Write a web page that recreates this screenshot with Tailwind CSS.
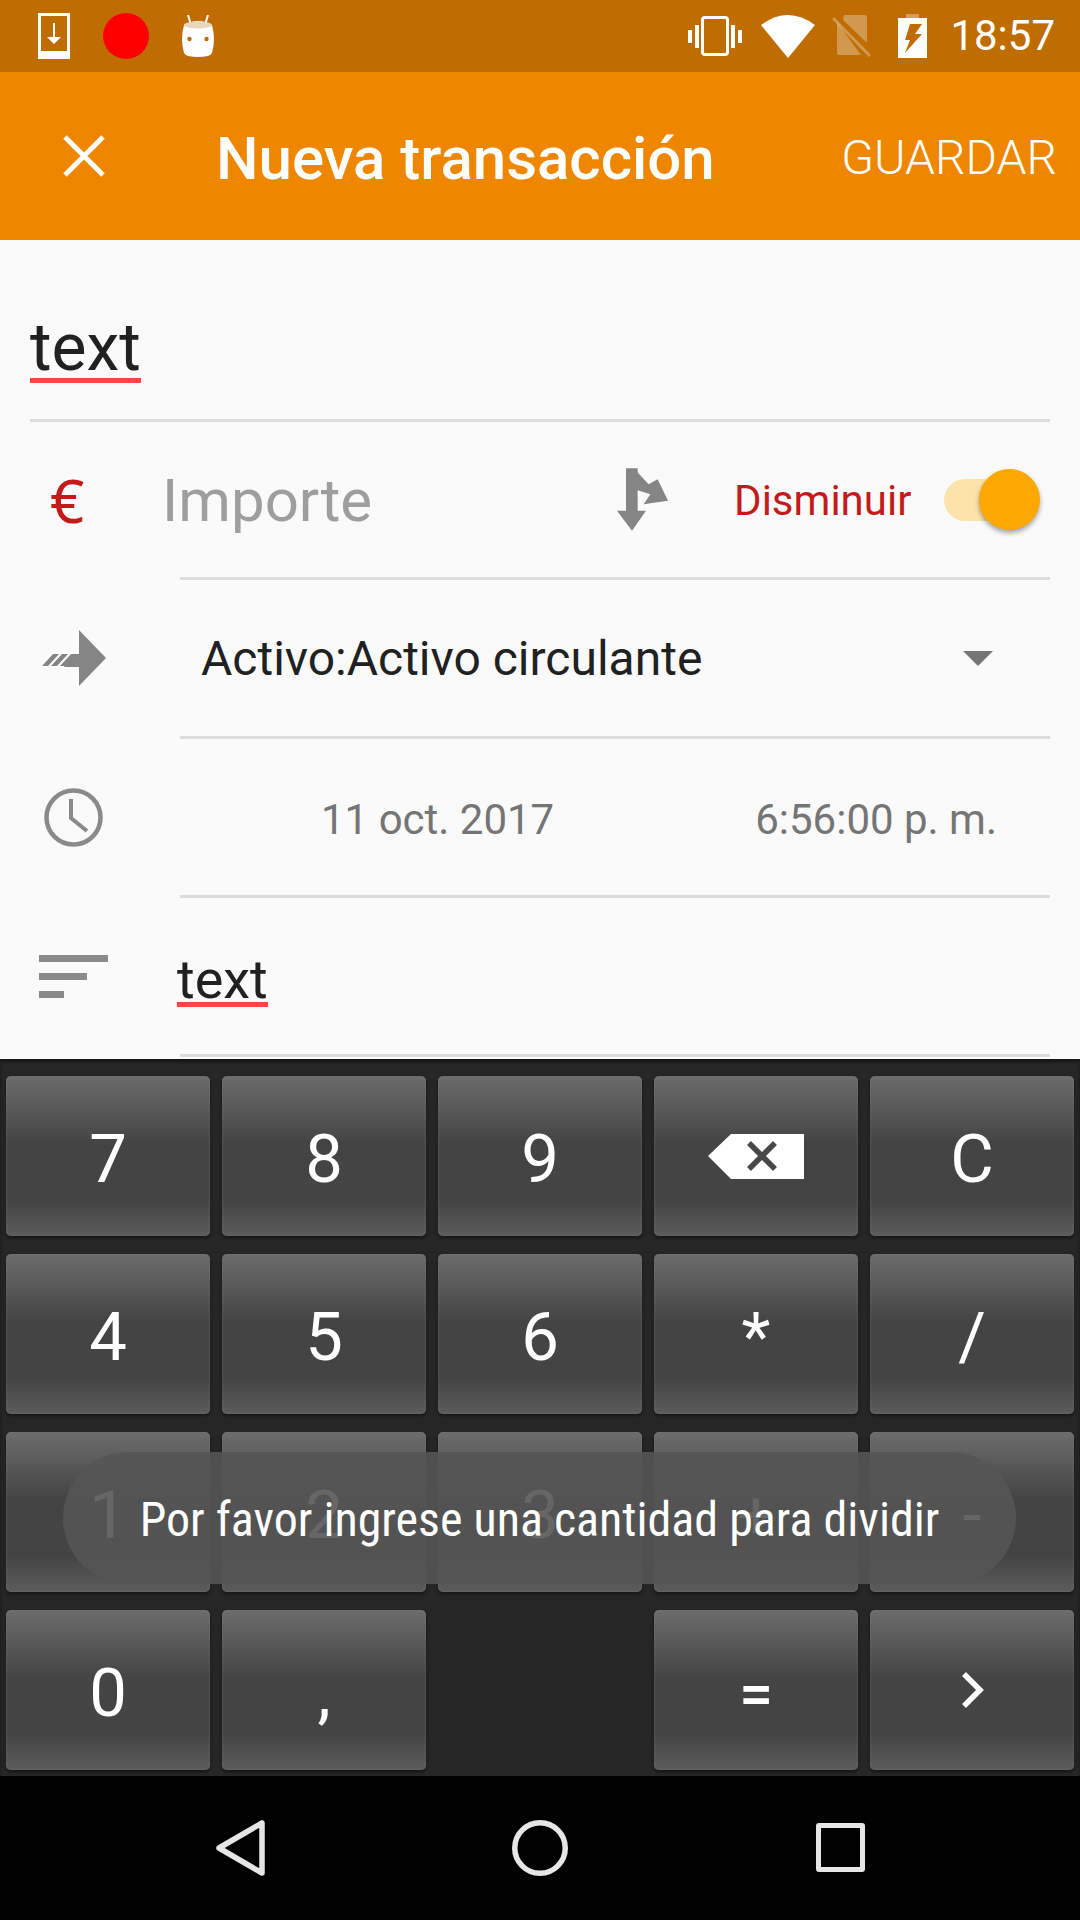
<!DOCTYPE html>
<html lang="es">
  <head>
    <meta charset="UTF-8" />
    <script src="https://cdn.jsdelivr.net/npm/@tailwindcss/browser@4"></script>
    <title>Nueva transacción</title>
  </head>
  <body class="bg-black">
    <div class="relative w-[1080px] h-[1920px] overflow-hidden flex flex-col font-['Roboto',sans-serif]">
      <!-- Status bar -->
      <header class="h-[72px] bg-[#BF6C00] flex items-center text-white">
        <svg class="ml-[38px]" width="32" height="46" viewBox="0 0 32 46">
          <path fill="#fff" fill-rule="evenodd" d="M0 0H32V46H0ZM3 3V38H29V3Z" />
          <path fill="#fff" d="M15 10H17V24H23L16 31L9 24H15Z" />
        </svg>
        <div class="ml-[33px] w-[46px] h-[46px] rounded-full bg-[#FF0000]"></div>
        <svg class="ml-[32px]" width="34" height="42" viewBox="0 0 34 42">
          <path stroke="#fff" stroke-width="2" d="M7 0L10 10M27 0L24 10" />
          <path fill="#fff" d="M3 10Q17 2 31 10Q35 24 31 38Q30 40 27 41Q17 43 7 41Q4 40 3 38Q-1 24 3 10Z" />
          <ellipse cx="17" cy="10" rx="14" ry="3.5" fill="#E9D6BC" />
          <circle cx="8.5" cy="24" r="2.2" fill="#BF6C00" />
          <circle cx="25.5" cy="24" r="2.2" fill="#BF6C00" />
        </svg>
        <div class="flex-1"></div>
        <svg width="54" height="40" viewBox="0 0 54 40">
          <rect x="14.5" y="1.5" width="25" height="37" rx="2.5" fill="none" stroke="#fff" stroke-width="3" />
          <path fill="#fff" d="M7 9H11V32H7ZM0 14H4V27H0ZM43 9H47V32H43ZM50 14H54V27H50Z" />
        </svg>
        <svg class="ml-[19px]" width="54" height="43" viewBox="0 0 54 43">
          <path fill="#fff" d="M0 10Q27 -10 54 10L27 43Z" />
        </svg>
        <svg class="ml-[17px]" width="39" height="42" viewBox="0 0 39 42">
          <path fill="#fff" fill-opacity=".3" d="M12 0H33Q35 0 35 2V28L11 5ZM5 7L29 40H7Q5 40 5 38Z" />
          <path stroke="#fff" stroke-opacity=".3" stroke-width="3" d="M1 3L38 41" />
        </svg>
        <svg class="ml-[27px]" width="29" height="44" viewBox="0 0 29 44">
          <path fill="#fff" fill-opacity=".35" d="M8 0H21V4H8Z" />
          <path fill="#fff" fill-rule="evenodd" d="M0 4H29V44H0ZM12 10L7 26H12L7 39L24 20H17L24 10Z" />
        </svg>
        <span class="ml-[23px] mr-[25px] text-[42px] leading-none">18:57</span>
      </header>

      <!-- App bar -->
      <div class="h-[168px] bg-[#EF8600] flex items-center text-white">
        <svg class="ml-[63px]" width="42" height="42" viewBox="0 0 42 42">
          <path stroke="#fff" stroke-width="5" d="M2 2L40 40M40 2L2 40" />
        </svg>
        <h1 class="ml-[111px] mt-[5px] text-[60px] font-medium leading-none">Nueva transacción</h1>
        <div class="flex-1"></div>
        <button class="mr-[23px] mt-[4px] text-[48px] font-[350] leading-none">GUARDAR</button>
      </div>

      <!-- Form -->
      <main class="h-[819px] bg-[#FAFAFA] flex flex-col">
        <div class="h-[182px] flex flex-col justify-end">
          <div class="ml-[30px] mb-[36px] self-start text-[66px] leading-[60px] text-[#212121] border-b-[5px] border-[#FF4444]">text</div>
          <div class="h-[3px] mx-[30px] bg-[#DCDCDC]"></div>
        </div>

        <div class="h-[158px] flex flex-col">
          <div class="flex-1 flex items-center">
            <span class="ml-[50px] w-[112px] text-[60px] leading-none text-[#C41A1A] font-['Noto_Sans',sans-serif]">€</span>
            <span class="mt-[2px] text-[60px] leading-none text-[#9E9E9E]">Importe</span>
            <svg class="ml-[245px]" width="51" height="63" viewBox="110 112 153 188">
              <path fill="#858585" d="M137 112H172V125L205 160L232 145L263 210L190 220L210 190L172 178V240H197L155 300L110 240H137Z" />
            </svg>
            <span class="ml-[66px] mt-[2px] text-[42px] leading-none text-[#C41A1A]">Disminuir</span>
            <div class="relative ml-[33px] w-[90px] h-[42px] rounded-full bg-[#FDE2AA]">
              <div class="absolute left-[35px] -top-[10px] w-[61px] h-[61px] rounded-full bg-[#FCA800] shadow-[0_3px_5px_rgba(0,0,0,0.35)]"></div>
            </div>
          </div>
          <div class="h-[3px] ml-[180px] mr-[30px] bg-[#DCDCDC]"></div>
        </div>

        <div class="h-[159px] flex flex-col">
          <div class="flex-1 flex items-center">
            <svg class="ml-[42px]" width="64" height="56" viewBox="0 0 64 56">
              <path fill="#858585" d="M37 0L64 28L37 56V37H22L29 26H37Z" />
              <path fill="#858585" d="M0 36L11 24H17L6 36ZM9 36L20 24H26L15 36ZM18 36L29 24H37V36Z" />
            </svg>
            <span class="ml-[95px] mt-[2px] text-[48px] leading-none text-[#212121]">Activo:Activo circulante</span>
            <div class="flex-1"></div>
            <div class="mr-[87px] w-0 h-0 border-x-[15px] border-x-transparent border-t-[15px] border-t-[#757575]"></div>
          </div>
          <div class="h-[3px] ml-[180px] mr-[30px] bg-[#DCDCDC]"></div>
        </div>

        <div class="h-[159px] flex flex-col">
          <div class="flex-1 flex items-center">
            <svg class="ml-[44px]" width="59" height="59" viewBox="0 0 59 59">
              <circle cx="29.5" cy="29.5" r="27" fill="none" stroke="#8A8A8A" stroke-width="4.5" />
              <path fill="none" stroke="#8A8A8A" stroke-width="4" d="M27 11V30L43 43" />
            </svg>
            <span class="ml-[218px] mt-[5px] text-[42px] leading-none text-[#757575]">11 oct. 2017</span>
            <div class="flex-1"></div>
            <span class="mr-[83px] mt-[5px] text-[42px] leading-none text-[#757575]">6:56:00 p. m.</span>
          </div>
          <div class="h-[3px] ml-[180px] mr-[30px] bg-[#DCDCDC]"></div>
        </div>

        <div class="h-[159px] flex flex-col">
          <div class="flex-1 flex items-center">
            <div class="ml-[39px] w-[69px] flex flex-col gap-[11px]">
              <div class="h-[7px] w-[69px] bg-[#8A8A8A]"></div>
              <div class="h-[7px] w-[48px] bg-[#8A8A8A]"></div>
              <div class="h-[7px] w-[25px] bg-[#8A8A8A]"></div>
            </div>
            <div class="ml-[69px] mt-[13px] text-[54px] leading-[44px] text-[#212121] border-b-[5px] border-[#FF4444]">text</div>
          </div>
          <div class="h-[3px] ml-[180px] mr-[30px] bg-[#DCDCDC]"></div>
        </div>
      </main>

      <!-- Keypad -->
      <section class="h-[717px] bg-[#262626] shadow-[inset_0_3px_3px_#161616] grid grid-cols-5 auto-rows-[160px] gap-x-[12px] gap-y-[18px] px-[6px] pt-[17px] text-white text-[67px] leading-none [&>button]:pt-[7px]">
        <button class="rounded-[5px] bg-[linear-gradient(180deg,#6c6c6c_0%,#444_42%,#444_78%,#5c5c5c_100%)] shadow-[0_2px_3px_#161616,inset_0_0_2px_#777]">7</button>
        <button class="rounded-[5px] bg-[linear-gradient(180deg,#6c6c6c_0%,#444_42%,#444_78%,#5c5c5c_100%)] shadow-[0_2px_3px_#161616,inset_0_0_2px_#777]">8</button>
        <button class="rounded-[5px] bg-[linear-gradient(180deg,#6c6c6c_0%,#444_42%,#444_78%,#5c5c5c_100%)] shadow-[0_2px_3px_#161616,inset_0_0_2px_#777]">9</button>
        <button class="rounded-[5px] bg-[linear-gradient(180deg,#6c6c6c_0%,#444_42%,#444_78%,#5c5c5c_100%)] shadow-[0_2px_3px_#161616,inset_0_0_2px_#777] flex items-center justify-center">
          <svg class="-mt-[7px]" width="96" height="45" viewBox="0 0 96 45">
            <path fill="#fff" d="M23 0H96V45H23L0 22Z" />
            <path stroke="#484848" stroke-width="5.5" d="M41 9L67 35M67 9L41 35" />
          </svg>
        </button>
        <button class="rounded-[5px] bg-[linear-gradient(180deg,#6c6c6c_0%,#444_42%,#444_78%,#5c5c5c_100%)] shadow-[0_2px_3px_#161616,inset_0_0_2px_#777]">C</button>

        <button class="rounded-[5px] bg-[linear-gradient(180deg,#6c6c6c_0%,#444_42%,#444_78%,#5c5c5c_100%)] shadow-[0_2px_3px_#161616,inset_0_0_2px_#777]">4</button>
        <button class="rounded-[5px] bg-[linear-gradient(180deg,#6c6c6c_0%,#444_42%,#444_78%,#5c5c5c_100%)] shadow-[0_2px_3px_#161616,inset_0_0_2px_#777]">5</button>
        <button class="rounded-[5px] bg-[linear-gradient(180deg,#6c6c6c_0%,#444_42%,#444_78%,#5c5c5c_100%)] shadow-[0_2px_3px_#161616,inset_0_0_2px_#777]">6</button>
        <button class="rounded-[5px] bg-[linear-gradient(180deg,#6c6c6c_0%,#444_42%,#444_78%,#5c5c5c_100%)] shadow-[0_2px_3px_#161616,inset_0_0_2px_#777]">*</button>
        <button class="rounded-[5px] bg-[linear-gradient(180deg,#6c6c6c_0%,#444_42%,#444_78%,#5c5c5c_100%)] shadow-[0_2px_3px_#161616,inset_0_0_2px_#777]">/</button>

        <button class="rounded-[5px] bg-[linear-gradient(180deg,#6c6c6c_0%,#444_42%,#444_78%,#5c5c5c_100%)] shadow-[0_2px_3px_#161616,inset_0_0_2px_#777]">1</button>
        <button class="rounded-[5px] bg-[linear-gradient(180deg,#6c6c6c_0%,#444_42%,#444_78%,#5c5c5c_100%)] shadow-[0_2px_3px_#161616,inset_0_0_2px_#777]">2</button>
        <button class="rounded-[5px] bg-[linear-gradient(180deg,#6c6c6c_0%,#444_42%,#444_78%,#5c5c5c_100%)] shadow-[0_2px_3px_#161616,inset_0_0_2px_#777]">3</button>
        <button class="rounded-[5px] bg-[linear-gradient(180deg,#6c6c6c_0%,#444_42%,#444_78%,#5c5c5c_100%)] shadow-[0_2px_3px_#161616,inset_0_0_2px_#777]">+</button>
        <button class="rounded-[5px] bg-[linear-gradient(180deg,#6c6c6c_0%,#444_42%,#444_78%,#5c5c5c_100%)] shadow-[0_2px_3px_#161616,inset_0_0_2px_#777]">-</button>

        <button class="rounded-[5px] bg-[linear-gradient(180deg,#6c6c6c_0%,#444_42%,#444_78%,#5c5c5c_100%)] shadow-[0_2px_3px_#161616,inset_0_0_2px_#777]">0</button>
        <button class="rounded-[5px] bg-[linear-gradient(180deg,#6c6c6c_0%,#444_42%,#444_78%,#5c5c5c_100%)] shadow-[0_2px_3px_#161616,inset_0_0_2px_#777]">,</button>
        <div></div>
        <button class="rounded-[5px] bg-[linear-gradient(180deg,#6c6c6c_0%,#444_42%,#444_78%,#5c5c5c_100%)] shadow-[0_2px_3px_#161616,inset_0_0_2px_#777] text-[60px] font-medium">=</button>
        <button class="rounded-[5px] bg-[linear-gradient(180deg,#6c6c6c_0%,#444_42%,#444_78%,#5c5c5c_100%)] shadow-[0_2px_3px_#161616,inset_0_0_2px_#777] flex items-center justify-center">
          <svg class="-mt-[7px] ml-[2px]" width="22" height="36" viewBox="0 0 22 36">
            <path fill="none" stroke="#fff" stroke-width="5.5" d="M2 2L18 18L2 34" />
          </svg>
        </button>
      </section>

      <!-- Nav bar -->
      <nav class="h-[144px] bg-black relative">
        <svg class="absolute left-[216px] top-[44px]" width="49" height="56" viewBox="0 0 49 56">
          <path fill="none" stroke="#E6E6E6" stroke-width="5.5" stroke-linejoin="round" d="M3 28L46 3V53Z" />
        </svg>
        <svg class="absolute left-[512px] top-[44px]" width="56" height="56" viewBox="0 0 56 56">
          <circle cx="28" cy="28" r="25.25" fill="none" stroke="#E6E6E6" stroke-width="5.5" />
        </svg>
        <div class="absolute left-[816px] top-[47px] w-[49px] h-[49px] rounded-[3px] border-[5.5px] border-[#E6E6E6]"></div>
      </nav>

      <!-- Toast -->
      <div class="absolute left-[63px] top-[1452px] w-[953px] h-[132px] pt-[4px] rounded-full bg-[#555555]/90 flex items-center justify-center">
        <span class="text-white text-[48px] leading-none whitespace-nowrap font-stretch-condensed">Por favor ingrese una cantidad para dividir</span>
      </div>
    </div>
  </body>
</html>
